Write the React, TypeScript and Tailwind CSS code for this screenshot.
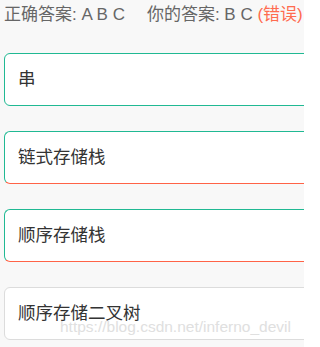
import React from "react";

export default function App() {
  return (
    <div className="relative w-[304px] h-[347px] overflow-hidden bg-[#f8f8f8] font-['Liberation_Sans','Noto_Sans_CJK_SC',sans-serif]">
      <div className="flex pl-[4px] text-[17px] leading-[30px] text-[#666666] whitespace-nowrap">
        <span>正确答案: A B C</span>
        <span className="ml-[22px]">
          你的答案: B C <span className="text-[#ff6b4f]">(错误)</span>
        </span>
      </div>
      <div className="mt-[23px] flex flex-col gap-[25px] pl-[4px]">
        <div className="w-[330px] h-[53px] flex items-center pl-[13px] rounded-[6px] border border-[#20b993] bg-white text-[17.5px] text-[#333333]">
          串
        </div>
        <div className="w-[330px] h-[53px] flex items-center pl-[13px] rounded-[6px] border border-t-[#20b993] border-l-[#20b993] border-b-[#ff6347] border-r-[#ff6347] bg-white text-[17.5px] text-[#333333]">
          链式存储栈
        </div>
        <div className="w-[330px] h-[53px] flex items-center pl-[13px] rounded-[6px] border border-t-[#20b993] border-l-[#20b993] border-b-[#ff6347] border-r-[#ff6347] bg-white text-[17.5px] text-[#333333]">
          顺序存储栈
        </div>
        <div className="w-[330px] h-[53px] flex items-center pl-[13px] rounded-[6px] border border-[#dcdcdc] bg-white text-[17.5px] text-[#333333]">
          顺序存储二叉树
        </div>
      </div>
      <div className="absolute left-[60px] top-[318px] text-[15.5px] leading-[18px] text-[#e0e0e0] whitespace-nowrap">
        https://blog.csdn.net/inferno_devil
      </div>
    </div>
  );
}
